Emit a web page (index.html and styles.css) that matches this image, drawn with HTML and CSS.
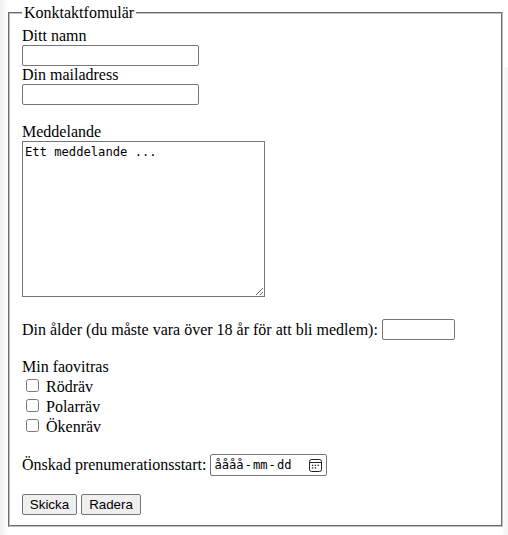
FILE: index.html
```html
<!DOCTYPE html>
<html lang="sv">
<head>
<meta charset="utf-8">
<title>Kontaktformulär</title>
<link rel="stylesheet" href="styles.css">
</head>
<body>
<form>
<fieldset class="panel">
<legend>Konktaktfomulär</legend>
<div class="group">
<label class="label" for="namn">Ditt namn</label>
<input class="box text" id="namn" type="text">
<label class="label" for="mail">Din mailadress</label>
<input class="box text" id="mail" type="email">
</div>
<div class="group message">
<label class="label" for="msg">Meddelande</label>
<textarea class="box area" id="msg">Ett meddelande ...</textarea>
</div>
<div class="row age">
<label for="age">Din ålder (du måste vara över 18 år för att bli medlem):</label>
<input class="box number" id="age" type="text">
</div>
<div class="group favorites">
<span class="label">Min faovitras</span>
<label class="check"><input type="checkbox">Rödräv</label>
<label class="check"><input type="checkbox">Polarräv</label>
<label class="check"><input type="checkbox">Ökenräv</label>
</div>
<div class="row start">
<span>Önskad prenumerationsstart:</span>
<div class="box date"><span>åååå</span><span class="dash">-</span><span>mm</span><span class="dash">-</span><span>dd</span>
<svg class="calendar" width="13" height="13" viewBox="0 0 13 13"><rect x=".5" y=".5" width="12" height="12" rx="2" fill="none" stroke="#222"/><path d="M1 3.5h11" stroke="#222"/><path d="M5.7 6.3h1.4M8.5 6.3h1.4M2.9 8.9h1.4M5.7 8.9h1.4M2.9 6.3h1.4" stroke="#222" stroke-width="1.3"/></svg>
</div>
</div>
<div class="row actions">
<button class="send" type="button">Skicka</button>
<button class="clear" type="button">Radera</button>
</div>
</fieldset>
</form>
</body>
</html>
```
FILE: styles.css
```css
* { box-sizing: border-box; }
html { background: #fff; }
body {
  margin: 0;
  height: 535px;
  overflow: hidden;
  padding: 4px 5px 0 8px;
  background:
    linear-gradient(90deg, #efefef, #fdfdfd) 0 0 / 8px 535px no-repeat,
    linear-gradient(90deg, #fbfbfb, #f3f3f3) 503px 67px / 5px 468px no-repeat,
    #fff;
  color: #000;
  font: 16px/18px "Liberation Serif", "Times New Roman", serif;
}
.panel {
  margin: 0;
  width: 495px;
  height: 523px;
  padding: 5px 12px 0;
  border: 2px groove #c0c0c0;
}
legend { margin: 0; padding: 0 2px; height: 18px; }
.group { display: flex; flex-direction: column; align-items: flex-start; }
.label { height: 18px; }
.box {
  margin: 0;
  border: 1px solid #767676;
  border-radius: 2px;
  background: #fff;
  outline: none;
}
.text { width: 177px; height: 21px; }
.message { margin-top: 18px; }
.area {
  width: 243px;
  height: 156px;
  padding: 2px;
  border-radius: 0;
  font: 12.15px/16px "DejaVu Sans Mono", monospace;
  resize: both;
}
.row { display: flex; align-items: center; gap: 4px; }
.age { margin-top: 22px; height: 21px; }
.number { width: 73px; height: 21px; }
.favorites { margin-top: 18px; }
.check { display: flex; align-items: center; height: 20px; gap: 7px; padding-top: 2px; }
.check input { width: 13px; height: 13px; margin: 0 0 3px 4px; }
.start { margin-top: 18px; height: 22px; }
.date {
  display: flex;
  align-items: center;
  width: 117px;
  height: 22px;
  padding: 0 4px 0 3px;
  font: 12.15px/16px "DejaVu Sans Mono", monospace;
}
.dash { margin: 0 1px; }
.calendar { margin-left: auto; }
.actions { margin-top: 18px; height: 21px; }
button {
  margin: 0;
  padding: 0;
  height: 21px;
  border: 1px solid #767676;
  border-radius: 2px;
  background: #efefef;
  color: #000;
  font: 13.333px/17px "Liberation Sans", Arial, sans-serif;
}
.send { width: 55px; }
.clear { width: 60px; }
```
